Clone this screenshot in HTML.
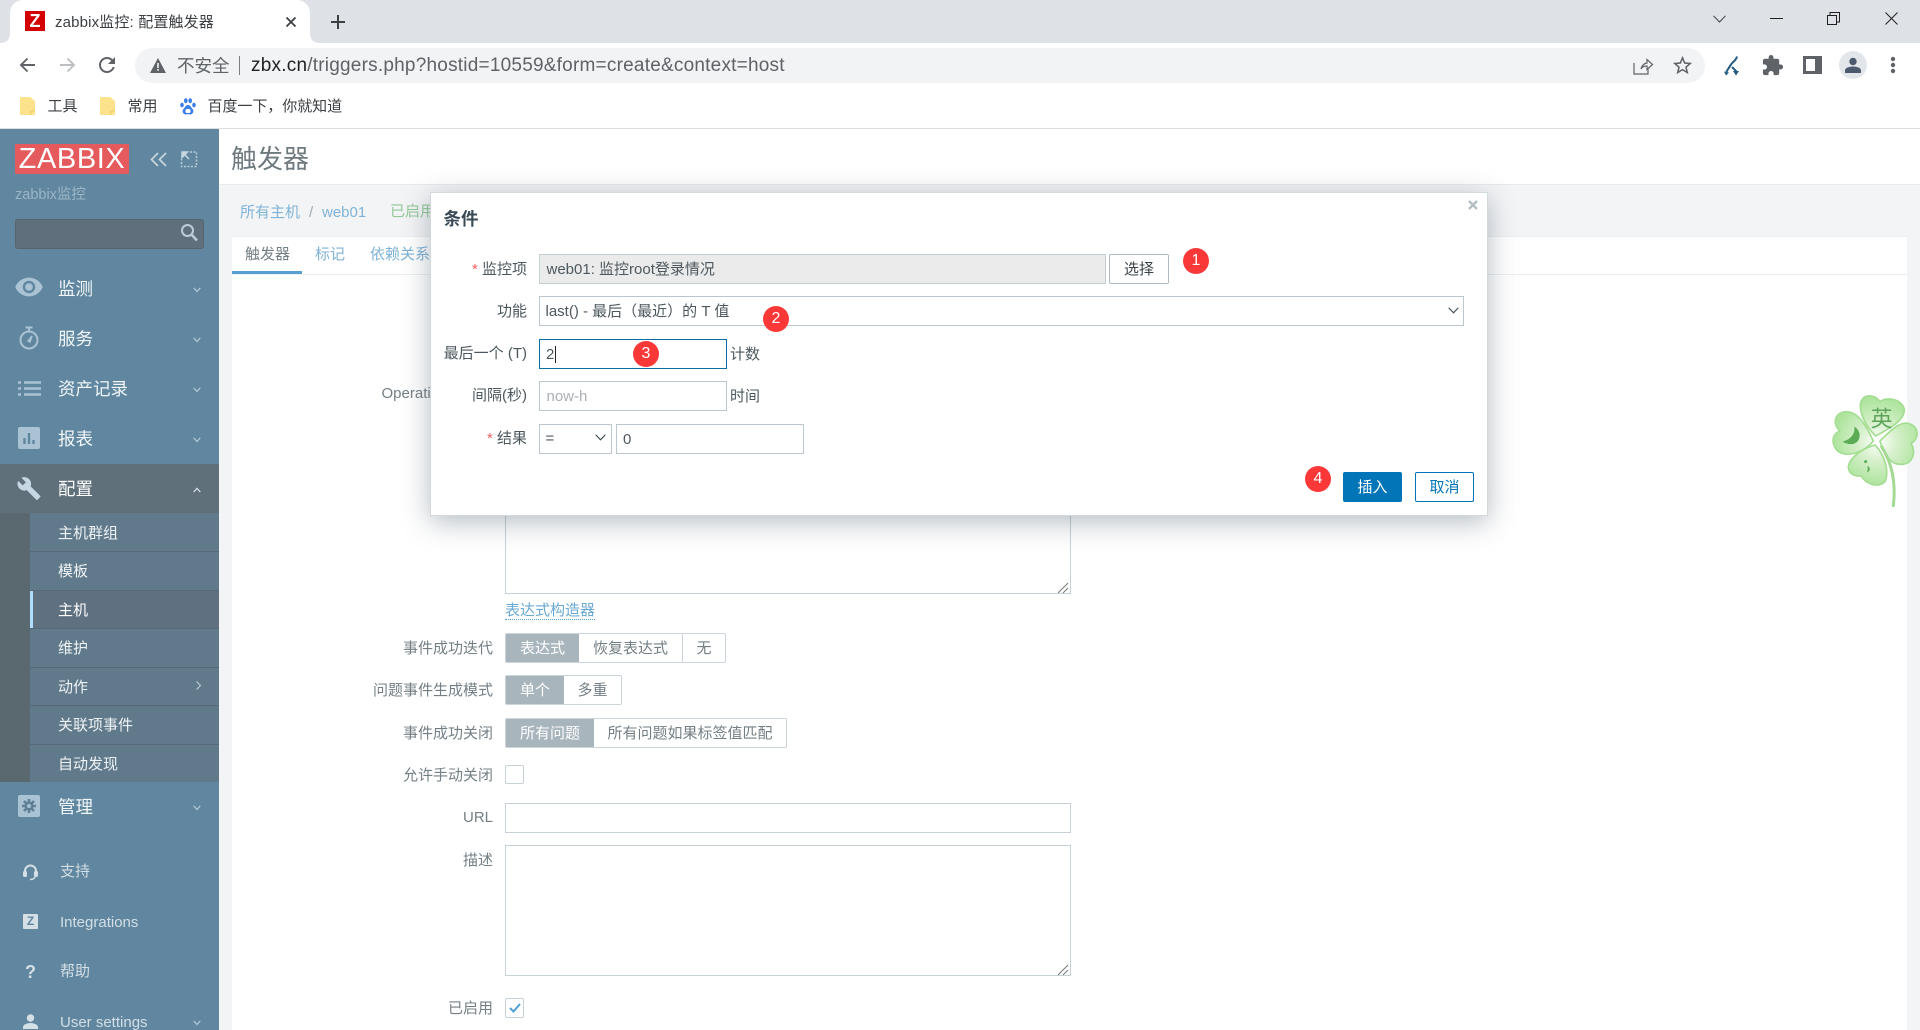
<!DOCTYPE html>
<html lang="zh"><head><meta charset="utf-8"><title>zabbix监控: 配置触发器</title>
<style>
*{box-sizing:border-box;margin:0;padding:0}
html,body{width:1920px;height:1030px;overflow:hidden;background:#fff}
body{position:relative;font-family:"Liberation Sans","Noto Sans CJK SC",sans-serif}
.a{position:absolute}
.t{position:absolute;white-space:nowrap;height:20px;line-height:20px;font-size:15px}
.r{text-align:right}
svg{position:absolute;overflow:visible}
.m{color:#f0f5f8;font-size:17.5px;left:58px}
.s{color:#eef3f6;font-size:15px;left:58px}
.b{color:#d4dfe6;font-size:15px;left:60px}
.lb{color:#747f85;font-size:15px}
.ml{color:#4d585e;font-size:15px}
.inp{position:absolute;border:1px solid #bcc7cd;background:#fff;height:30px}
.rg{position:absolute;height:30px;border:1px solid #ccd5da;border-radius:2px;background:#fff;display:flex;font-size:15px;color:#747f85;line-height:29px}
.rg span{display:block;text-align:center;border-left:1px solid #ccd5da;height:28px}
.rg span.on{background:#a8b5bd;color:#fff;border-left:0}
.dot{position:absolute;width:26px;height:26px;border-radius:50%;background:#fb3838;color:#fff;font-size:16px;line-height:25px;text-align:center}
.sep{position:absolute;left:30px;width:189px;height:1px;background:#586a77}
</style></head><body>

<!-- Tab strip -->
<div class="a" style="left:0;top:0;width:1920px;height:43px;background:#dee1e6"></div>
<div class="a" style="left:10px;top:0;width:300px;height:43px;background:#fff;border-radius:13px 13px 0 0"></div>
<svg style="left:0;top:33px" width="10" height="10"><path d="M0 10Q10 10 10 0V10Z" fill="#fff"/></svg>
<svg style="left:310px;top:33px" width="10" height="10"><path d="M10 10Q0 10 0 0V10Z" fill="#fff"/></svg>
<div class="a" style="left:25px;top:11px;width:20px;height:20px;background:#d40000;color:#fff;font-weight:bold;font-size:18px;line-height:20px;text-align:center">Z</div>
<div class="t" style="left:55px;top:13px;color:#3c4043;font-size:15px;letter-spacing:.15px">zabbix监控: 配置触发器</div>
<svg style="left:285px;top:16px" width="12" height="12" viewBox="0 0 12 12"><path d="M1.500 1.500L10.500 10.500M10.500 1.500L1.500 10.500" stroke="#3c4043" stroke-width="1.800" fill="none"/></svg>
<svg style="left:330px;top:14px" width="16" height="16" viewBox="0 0 16 16"><path d="M8 1V15M1 8H15" stroke="#3c4043" stroke-width="2" fill="none"/></svg>
<svg style="left:1713px;top:15px" width="13" height="8" viewBox="0 0 13 8"><path d="M.5 .8L6.500 7L12.500 .8" stroke="#3c4043" fill="none"/></svg>
<div class="a" style="left:1770px;top:18px;width:13px;height:1px;background:#1f1f1f"></div>
<svg style="left:1827px;top:12px" width="13" height="13" viewBox="0 0 13 13"><path d="M.5 3.500H9.500V12.500H.5ZM3 3.500V.5H12.500V10H9.500" stroke="#1f1f1f" fill="none"/></svg>
<svg style="left:1885px;top:12px" width="13" height="13" viewBox="0 0 13 13"><path d="M.5 .5L12.500 12.500M12.500 .5L.5 12.500" stroke="#1f1f1f" fill="none"/></svg>

<!-- Toolbar -->
<svg style="left:19px;top:57px" width="17" height="16" viewBox="0 0 17 16"><path d="M16 8H2M8.500 1.500L2 8L8.500 14.500" stroke="#5f6368" stroke-width="1.900" fill="none"/></svg>
<svg style="left:59px;top:57px" width="17" height="16" viewBox="0 0 17 16"><path d="M1 8H15M8.500 1.500L15 8L8.500 14.500" stroke="#bcbfc3" stroke-width="1.900" fill="none"/></svg>
<svg style="left:95px;top:53px" width="24" height="24" viewBox="0 0 24 24"><path d="M17.650 6.350C16.200 4.900 14.210 4 12 4c-4.420 0-7.990 3.580-7.990 8s3.570 8 7.990 8c3.730 0 6.840-2.550 7.730-6h-2.080c-.82 2.330-3.040 4-5.650 4-3.310 0-6-2.690-6-6s2.690-6 6-6c1.660 0 3.140.69 4.220 1.780L13 11h7V4l-2.350 2.350z" fill="#5f6368"/></svg>
<div class="a" style="left:135px;top:48px;width:1570px;height:35px;border-radius:18px;background:#f1f3f4"></div>
<svg style="left:150px;top:58px" width="16" height="15" viewBox="0 0 16 15"><path d="M8 0L16 15H0Z" fill="#5f6368"/><path d="M7.200 5H8.800V10H7.200ZM7.200 11H8.800V12.700H7.200Z" fill="#f1f3f4"/></svg>
<div class="t" style="left:177px;top:56px;color:#5f6368;font-size:17.500px">不安全</div>
<div class="a" style="left:239px;top:56px;width:1px;height:19px;background:#7b7f83"></div>
<div class="t" style="left:251px;top:56px;font-size:19px;color:#5f6368;letter-spacing:.22px"><span style="color:#202124">zbx.cn</span>/triggers.php?hostid=10559&amp;form=create&amp;context=host</div>
<svg style="left:1633px;top:57px" width="20" height="18" viewBox="0 0 20 18"><path d="M1 6V17H15V12M8 12C9 8 12 6 14 6V2.500L19.500 7.500L14 12.500V9C11.500 9 9 10 8 12Z" stroke="#5f6368" stroke-width="1.200" fill="none"/></svg>
<svg style="left:1671px;top:54px" width="23" height="23" viewBox="0 0 24 24"><path d="M22 9.240l-7.190-.62L12 2 9.190 8.630 2 9.240l5.460 4.730L5.820 21 12 17.270 18.180 21l-1.630-7.030L22 9.240zM12 15.400l-3.760 2.270 1-4.280-3.320-2.880 4.380-.38L12 6.100l1.710 4.040 4.380.38-3.320 2.880 1 4.280L12 15.400z" fill="#5f6368"/></svg>
<svg style="left:1724px;top:56px" width="18" height="20" viewBox="0 0 18 20"><path d="M13 .5C12 5 8 6 6 10C5 12 3 14 2.500 16M8 11L12 15V18" stroke="#235a80" stroke-width="2" fill="none"/><path d="M0 15.500L5 16.500L2 19.500ZM9 15L15 15L12 19.500Z" fill="#235a80"/></svg>
<svg style="left:1761px;top:54px" width="23" height="23" viewBox="0 0 24 24"><path d="M20.500 11H19V7c0-1.100-.9-2-2-2h-4V3.500C13 2.120 11.880 1 10.500 1S8 2.120 8 3.500V5H4c-1.100 0-1.990.9-1.990 2v3.800H3.500c1.490 0 2.700 1.210 2.700 2.700s-1.210 2.700-2.700 2.700H2V20c0 1.100.9 2 2 2h3.800v-1.500c0-1.490 1.210-2.700 2.700-2.700 1.490 0 2.700 1.210 2.700 2.700V22H17c1.100 0 2-.9 2-2v-4h1.500c1.380 0 2.500-1.120 2.500-2.500S21.880 11 20.500 11z" fill="#5f6368"/></svg>
<div class="a" style="left:1803px;top:56px;width:19px;height:18px;background:#5f6368"></div>
<div class="a" style="left:1806px;top:59px;width:9px;height:12px;background:#fff"></div>
<div class="a" style="left:1839px;top:51px;width:28px;height:28px;border-radius:50%;background:#e2e6ea"></div>
<svg style="left:1845px;top:57px" width="16" height="16" viewBox="0 0 16 16"><circle cx="8" cy="4.500" r="3.700" fill="#4d5a6e"/><path d="M0 16V13.500C0 10.500 5 9.500 8 9.500S16 10.500 16 13.500V16Z" fill="#4d5a6e"/></svg>
<svg style="left:1889px;top:56px" width="8" height="18" viewBox="0 0 8 18"><circle cx="4" cy="3" r="2.200" fill="#5f6368"/><circle cx="4" cy="9" r="2.200" fill="#5f6368"/><circle cx="4" cy="15" r="2.200" fill="#5f6368"/></svg>

<!-- Bookmarks -->
<svg style="left:20px;top:97px" width="16" height="19" viewBox="0 0 16 19"><path d="M1 0H10L15 4V17Q15 18 14 18H1Q0 18 0 17V1Q0 0 1 0Z" fill="#fde28c"/><path d="M11 18V14H15" stroke="#f3c95f" fill="none"/></svg>
<div class="t" style="left:47.500px;top:97px;color:#3c4043">工具</div>
<svg style="left:100px;top:97px" width="16" height="19" viewBox="0 0 16 19"><path d="M1 0H10L15 4V17Q15 18 14 18H1Q0 18 0 17V1Q0 0 1 0Z" fill="#fde28c"/><path d="M11 18V14H15" stroke="#f3c95f" fill="none"/></svg>
<div class="t" style="left:127.500px;top:97px;color:#3c4043">常用</div>
<svg style="left:180px;top:98px" width="16" height="17" viewBox="0 0 16 17"><g fill="#3a7ee8"><ellipse cx="2" cy="7" rx="1.800" ry="2.300"/><ellipse cx="5.800" cy="2.700" rx="1.800" ry="2.500"/><ellipse cx="10.200" cy="2.700" rx="1.800" ry="2.500"/><ellipse cx="14" cy="7" rx="1.800" ry="2.300"/><path d="M8 7C5.500 7 5 9.500 3.500 11C1.500 13 3 16.500 6 16.500C7 16.500 7.500 16 8 16S9 16.500 10 16.500C13 16.500 14.500 13 12.500 11C11 9.500 10.500 7 8 7Z"/></g><rect x="5.500" y="11" width="5" height="4" rx="1.500" fill="#fff"/></svg>
<div class="t" style="left:207.500px;top:97px;color:#3c4043;letter-spacing:-.05px">百度一下，你就知道</div>
<div class="a" style="left:0;top:128px;width:1920px;height:1px;background:#dcdfe2"></div>

<!-- Main bg -->
<div class="a" style="left:219px;top:129px;width:1701px;height:56px;background:#fff;border-bottom:1px solid #e8eaec"></div>
<div class="a" style="left:219px;top:185px;width:1701px;height:845px;background:#f3f4f6"></div>
<div class="t" style="left:231px;top:144px;height:30px;line-height:30px;font-size:26px;color:#6f7a80">触发器</div>
<div class="t" style="left:240px;top:203px;color:#7fb3d6">所有主机</div>
<div class="t" style="left:309px;top:203px;color:#a0aab0">/</div>
<div class="t" style="left:322px;top:203px;color:#7fb3d6">web01</div>
<div class="t" style="left:390px;top:202px;color:#92c99a">已启用</div>

<div class="a" style="left:232px;top:236px;width:1675px;height:794px;background:#fff;border-top:1px solid #eceef0"></div>
<div class="a" style="left:232px;top:274px;width:1675px;height:1px;background:#eceef0"></div>
<div class="t" style="left:245px;top:245px;color:#747f85">触发器</div>
<div class="a" style="left:232px;top:271px;width:70px;height:3px;background:#57a0d2"></div>
<div class="t" style="left:315px;top:245px;color:#7fb3d6">标记</div>
<div class="t" style="left:370px;top:245px;color:#7fb3d6">依赖关系</div>
<div class="t lb" style="left:381.500px;top:384px">Operational data</div>

<!-- Background form -->
<div class="a" style="left:505px;top:400px;width:566px;height:194px;border:1px solid #c8d1d6;background:#fff"></div>
<svg style="left:1057px;top:582px" width="12" height="12" viewBox="0 0 12 12"><path d="M1 11L11 1M6 11L11 6" stroke="#777" fill="none"/></svg>
<div class="t" style="left:505px;top:601px;color:#6aa9d4">表达式构造器</div>
<div class="a" style="left:505px;top:619px;width:90px;height:0;border-top:1px dotted #4f9fd5"></div>

<div class="t lb r" style="right:1427px;top:639px">事件成功迭代</div>
<div class="rg" style="left:505px;top:633px;width:221px"><span class="on" style="width:73px">表达式</span><span style="width:103px;border-left:0">恢复表达式</span><span style="flex:1">无</span></div>
<div class="t lb r" style="right:1427px;top:681px">问题事件生成模式</div>
<div class="rg" style="left:505px;top:675px;width:117px"><span class="on" style="width:58px">单个</span><span style="flex:1;border-left:0">多重</span></div>
<div class="t lb r" style="right:1427px;top:724px">事件成功关闭</div>
<div class="rg" style="left:505px;top:718px;width:282px"><span class="on" style="width:88px">所有问题</span><span style="flex:1;border-left:0">所有问题如果标签值匹配</span></div>
<div class="t lb r" style="right:1427px;top:766px">允许手动关闭</div>
<div class="a" style="left:505px;top:765px;width:19px;height:19px;border:1px solid #c8d1d6;border-radius:2px"></div>
<div class="t lb r" style="right:1427px;top:808px">URL</div>
<div class="a" style="left:505px;top:803px;width:566px;height:30px;border:1px solid #c8d1d6"></div>
<div class="t lb r" style="right:1427px;top:851px">描述</div>
<div class="a" style="left:505px;top:845px;width:566px;height:131px;border:1px solid #c8d1d6"></div>
<svg style="left:1057px;top:964px" width="12" height="12" viewBox="0 0 12 12"><path d="M1 11L11 1M6 11L11 6" stroke="#777" fill="none"/></svg>
<div class="t lb r" style="right:1427px;top:999px">已启用</div>
<div class="a" style="left:505px;top:998px;width:19px;height:20px;border:1px solid #c8d1d6;border-radius:2px"></div>
<svg style="left:509px;top:1003px" width="12" height="10" viewBox="0 0 12 10"><path d="M1 5L4.500 8.500L11 1" stroke="#4f9fd5" stroke-width="2" fill="none"/></svg>

<!-- Clover -->
<svg style="left:1825px;top:385px" width="95" height="130" viewBox="0 0 285 390">
<defs>
<radialGradient id="g" gradientUnits="userSpaceOnUse" cx="158" cy="170" r="130"><stop offset="0" stop-color="#ffffff"/><stop offset=".45" stop-color="#d6f0cb"/><stop offset="1" stop-color="#aee49d"/></radialGradient>
</defs>
<g stroke="#a3de92" stroke-width="5" stroke-linejoin="round" fill="url(#g)">
<path d="M152 153C118 120 100 75 108 50C118 25 150 28 165 50C182 35 228 40 238 72C240 105 195 130 152 153Z"/>
<path d="M145 168C115 205 60 220 35 195C15 170 25 145 45 138C20 115 30 82 62 80C100 78 125 125 145 168Z"/>
<path d="M165 168C185 150 225 100 258 118C285 130 280 165 258 175C275 205 262 240 225 238C195 238 175 205 165 168Z"/>
<path d="M150 180C115 190 75 215 70 245C70 272 98 275 108 272C122 298 160 310 180 290C195 255 175 205 150 180Z"/>
</g>
<path d="M170 185C195 225 215 280 205 362" stroke="#a3d993" stroke-width="9" fill="none" stroke-linecap="round"/>
<path d="M88 124C122 148 98 196 52 170C72 165 92 150 88 124Z" fill="#5cab57"/>
<circle cx="122" cy="230" r="4.500" fill="#5cab57"/><path d="M127 243C138 246 136 260 125 262C130 255 128 249 127 243Z" fill="#5cab57"/>
<text x="170" y="124" text-anchor="middle" font-size="66" fill="#5ea35a" font-family="'Noto Sans CJK SC',sans-serif">英</text>
</svg>

<!-- Sidebar -->
<div class="a" style="left:0;top:129px;width:219px;height:901px;background:#60879f"></div>
<div class="a" style="left:15px;top:144px;width:114px;height:30px;background:#e55a5c;color:#fff;font-size:29px;line-height:30px;text-align:center;letter-spacing:.6px">ZABBIX</div>
<svg style="left:150px;top:152px" width="18" height="15" viewBox="0 0 18 15"><path d="M8 1L1.500 7.500L8 14M16 1L9.500 7.500L16 14" stroke="#c8d6e0" stroke-width="1.700" fill="none"/></svg>
<svg style="left:181px;top:151px" width="16" height="16" viewBox="0 0 16 16"><path d="M9 1H15.500V15.500H.5V8" stroke="#b9cbd7" stroke-width="1.500" stroke-dasharray="2 1.500" fill="none"/><path d="M1 1H6.500L1 6.500ZM4 4L8 8" stroke="#c8d6e0" stroke-width="1.500" fill="#c8d6e0"/></svg>
<div class="t" style="left:15px;top:185px;color:#9cb5c6;font-size:14.500px">zabbix监控</div>
<div class="a" style="left:15px;top:219px;width:189px;height:30px;background:#5f707c;border:1px solid #56646f;border-radius:3px"></div>
<svg style="left:180px;top:223px" width="18" height="19" viewBox="0 0 18 19"><circle cx="7.500" cy="7.500" r="5.500" stroke="#bccdd8" stroke-width="2" fill="none"/><path d="M11.500 11.500L17 17.500" stroke="#bccdd8" stroke-width="2.500"/></svg>

<svg style="left:14px;top:272px" width="30" height="30" viewBox="0 0 24 24"><path d="M12 4.500C7 4.500 2.730 7.610 1 12c1.730 4.390 6 7.500 11 7.500s9.270-3.110 11-7.500c-1.730-4.390-6-7.500-11-7.500zM12 17c-2.760 0-5-2.240-5-5s2.240-5 5-5 5 2.240 5 5-2.240 5-5 5zm0-8c-1.660 0-3 1.340-3 3s1.340 3 3 3 3-1.340 3-3-1.340-3-3-3z" fill="#a9c3d5"/></svg>
<div class="t m" style="top:279px">监测</div>
<svg style="left:19px;top:326px" width="20" height="24" viewBox="0 0 20 24"><circle cx="10" cy="14" r="8.500" stroke="#a9c3d5" stroke-width="2" fill="none"/><path d="M6.500 1.500H13.500M10 2V5" stroke="#a9c3d5" stroke-width="2" fill="none"/><path d="M9 15L13 10L11 16Z" stroke="#a9c3d5" stroke-width="1.500" fill="#a9c3d5"/></svg>
<div class="t m" style="top:329px">服务</div>
<svg style="left:18px;top:381px" width="23" height="15" viewBox="0 0 23 15"><path d="M0 1.500H3M6 1.500H23M0 7.500H3M6 7.500H23M0 13.500H3M6 13.500H23" stroke="#a9c3d5" stroke-width="2.400" fill="none"/></svg>
<div class="t m" style="top:379px">资产记录</div>
<div class="a" style="left:18px;top:427px;width:22px;height:22px;border-radius:2px;background:#a9c3d5"></div>
<svg style="left:18px;top:427px" width="22" height="22" viewBox="0 0 22 22"><path d="M6.500 11V17M11 6V17M15.500 13V17" stroke="#60879f" stroke-width="2.400"/></svg>
<div class="t m" style="top:429px">报表</div>

<div class="a" style="left:0;top:464px;width:219px;height:49px;background:#5f707b"></div>
<svg style="left:16px;top:476px" width="26" height="25" viewBox="0 0 24 24"><path d="M22.700 19l-9.100-9.100c.9-2.300.4-5-1.500-6.900-2-2-5-2.400-7.400-1.300L9 6 6 9 1.600 4.700C.4 7.100.9 10.100 2.900 12.100c1.900 1.900 4.600 2.400 6.900 1.500l9.100 9.100c.4.4 1 .4 1.400 0l2.300-2.300c.5-.4.5-1.100.1-1.400z" fill="#c6d8e4"/></svg>
<div class="t m" style="top:479px;color:#fff">配置</div>

<div class="a" style="left:0;top:513px;width:30px;height:269px;background:#5a686f"></div>
<div class="a" style="left:30px;top:513px;width:189px;height:269px;background:#617a8b"></div>
<div class="a" style="left:30px;top:590px;width:189px;height:39px;background:#5f7180"></div>
<div class="a" style="left:30px;top:590px;width:3px;height:39px;background:#b0dcff"></div>
<div class="sep" style="top:551px"></div><div class="sep" style="top:590px"></div><div class="sep" style="top:628px"></div><div class="sep" style="top:667px"></div><div class="sep" style="top:705px"></div><div class="sep" style="top:744px"></div>
<div class="t s" style="top:524px">主机群组</div>
<div class="t s" style="top:562px">模板</div>
<div class="t s" style="top:600.500px;color:#fff">主机</div>
<div class="t s" style="top:638.500px">维护</div>
<div class="t s" style="top:677.500px">动作</div>
<div class="t s" style="top:715.500px">关联项事件</div>
<div class="t s" style="top:754.500px">自动发现</div>
<svg style="left:195px;top:681px" width="7" height="9" viewBox="0 0 7 9"><path d="M1.500 .5L5.500 4.500L1.500 8.500" stroke="#c3d3de" fill="none"/></svg>

<div class="a" style="left:18px;top:795px;width:22px;height:22px;border-radius:2px;background:#a9c3d5"></div>
<svg style="left:21px;top:798px" width="16" height="16" viewBox="0 0 16 16"><circle cx="8" cy="8" r="4.500" fill="#5f7f94"/><path d="M8 1V15M1 8H15M3 3L13 13M13 3L3 13" stroke="#5f7f94" stroke-width="2.600"/><circle cx="8" cy="8" r="2" fill="#a9c3d5"/></svg>
<div class="t m" style="top:797px">管理</div>

<svg style="left:23px;top:863.500px" width="15" height="17" viewBox="0 0 15 17"><path d="M2 10V7A5.500 5.500 0 0 1 13 7V10" stroke="#d4dfe6" stroke-width="2" fill="none"/><rect x="0" y="7" width="4" height="6" rx="1.500" fill="#d4dfe6"/><rect x="11" y="7" width="4" height="6" rx="1.500" fill="#d4dfe6"/><path d="M12 13Q11 15.500 7 15.500" stroke="#d4dfe6" stroke-width="1.500" fill="none"/></svg>
<div class="t b" style="top:862px">支持</div>
<div class="a" style="left:23px;top:914px;width:15px;height:15px;background:#d4dfe6;border-radius:1px;color:#60879f;font-weight:bold;font-size:12px;line-height:15px;text-align:center">Z</div>
<div class="t b" style="top:912.500px">Integrations</div>
<div class="t" style="left:25px;top:962px;color:#d4dfe6;font-size:18px;font-weight:bold">?</div>
<div class="t b" style="top:962px">帮助</div>
<svg style="left:23px;top:1014px" width="15" height="15" viewBox="0 0 15 15"><circle cx="7.500" cy="4" r="3.700" fill="#d4dfe6"/><path d="M0 15V13C0 10.500 4.500 9 7.500 9S15 10.500 15 13V15Z" fill="#d4dfe6"/></svg>
<div class="t b" style="top:1012.500px">User settings</div>

<svg style="left:193px;top:287px" width="8" height="6" viewBox="0 0 8 6"><path d="M.7 .9L4 4.500L7.300 .9" stroke="#b9ccd9" stroke-width="1.200" fill="none"/></svg>
<svg style="left:193px;top:337px" width="8" height="6" viewBox="0 0 8 6"><path d="M.7 .9L4 4.500L7.300 .9" stroke="#b9ccd9" stroke-width="1.200" fill="none"/></svg>
<svg style="left:193px;top:387px" width="8" height="6" viewBox="0 0 8 6"><path d="M.7 .9L4 4.500L7.300 .9" stroke="#b9ccd9" stroke-width="1.200" fill="none"/></svg>
<svg style="left:193px;top:437px" width="8" height="6" viewBox="0 0 8 6"><path d="M.7 .9L4 4.500L7.300 .9" stroke="#b9ccd9" stroke-width="1.200" fill="none"/></svg>
<svg style="left:193px;top:487px" width="8" height="6" viewBox="0 0 8 6"><path d="M.7 5L4 1.400L7.300 5" stroke="#dfe8ee" stroke-width="1.200" fill="none"/></svg>
<svg style="left:193px;top:805px" width="8" height="6" viewBox="0 0 8 6"><path d="M.7 .9L4 4.500L7.300 .9" stroke="#b9ccd9" stroke-width="1.200" fill="none"/></svg>
<svg style="left:193px;top:1020px" width="8" height="6" viewBox="0 0 8 6"><path d="M.7 .9L4 4.500L7.300 .9" stroke="#b9ccd9" stroke-width="1.200" fill="none"/></svg>

<!-- Modal -->
<div class="a" style="left:430px;top:192px;width:1058px;height:324px;background:#fff;border:1px solid #d2d9dd;box-shadow:0 6px 26px rgba(60,80,95,.38)"></div>
<div class="t" style="left:443.500px;top:209px;font-size:17.500px;font-weight:bold;color:#3a4a54">条件</div>
<svg style="left:1468px;top:200px" width="10" height="10" viewBox="0 0 10 10"><path d="M1 1L9 9M9 1L1 9" stroke="#b4c0c6" stroke-width="2.400" fill="none"/></svg>

<div class="t r" style="right:1393px;top:260px;font-size:15px;color:#4d585e"><span style="color:#f06060">*</span> 监控项</div>
<div class="inp" style="left:539px;top:254px;width:567px;background:#ebebeb;border-color:#c5ced3"></div>
<div class="t" style="left:546.500px;top:260px;color:#4d585e">web01: 监控root登录情况</div>
<div class="a" style="left:1109px;top:254px;width:60px;height:30px;border:1px solid #acbbc4;border-radius:2px;background:#fff;color:#3c4449;font-size:15px;line-height:29px;text-align:center">选择</div>

<div class="t ml r" style="right:1393px;top:302px">功能</div>
<div class="inp" style="left:539px;top:296px;width:925px"></div>
<div class="t" style="left:545.500px;top:302px;color:#4d585e">last() - 最后（最近）的 T 值</div>
<svg style="left:1448px;top:307px" width="11" height="7" viewBox="0 0 11 7"><path d="M.7 .7L5.500 5.800L10.300 .7" stroke="#3d4a52" stroke-width="1.100" fill="none"/></svg>

<div class="t ml r" style="right:1393px;top:344px">最后一个 (T)</div>
<div class="inp" style="left:539px;top:339px;width:188px;border-color:#0c6ca4"></div>
<div class="t" style="left:546px;top:344.500px;color:#4d585e">2</div>
<div class="a" style="left:555px;top:346px;width:1px;height:17px;background:#222"></div>
<div class="t ml" style="left:730px;top:345px">计数</div>

<div class="t ml r" style="right:1393px;top:386px">间隔(秒)</div>
<div class="inp" style="left:539px;top:381px;width:188px"></div>
<div class="t" style="left:546.500px;top:387px;color:#a9afb3">now-h</div>
<div class="t ml" style="left:730px;top:387px">时间</div>

<div class="t r" style="right:1393px;top:429px;font-size:15px;color:#4d585e"><span style="color:#f06060">*</span> 结果</div>
<div class="inp" style="left:539px;top:424px;width:73px"></div>
<div class="t" style="left:545.500px;top:429px;color:#4d585e">=</div>
<svg style="left:595px;top:434px" width="11" height="7" viewBox="0 0 11 7"><path d="M.7 .7L5.500 5.800L10.300 .7" stroke="#3d4a52" stroke-width="1.100" fill="none"/></svg>
<div class="inp" style="left:616px;top:424px;width:188px"></div>
<div class="t" style="left:623px;top:429.500px;color:#4d585e">0</div>

<div class="a" style="left:1343px;top:472px;width:59px;height:30px;background:#0275b8;border-radius:2px;color:#fff;font-size:15px;line-height:31px;text-align:center">插入</div>
<div class="a" style="left:1415px;top:472px;width:59px;height:30px;background:#fff;border:1px solid #0275b8;border-radius:2px;color:#0275b8;font-size:15px;line-height:29px;text-align:center">取消</div>

<div class="dot" style="left:1183px;top:248px">1</div>
<div class="dot" style="left:763px;top:306px">2</div>
<div class="dot" style="left:633px;top:341px">3</div>
<div class="dot" style="left:1305px;top:466px">4</div>
</body></html>
